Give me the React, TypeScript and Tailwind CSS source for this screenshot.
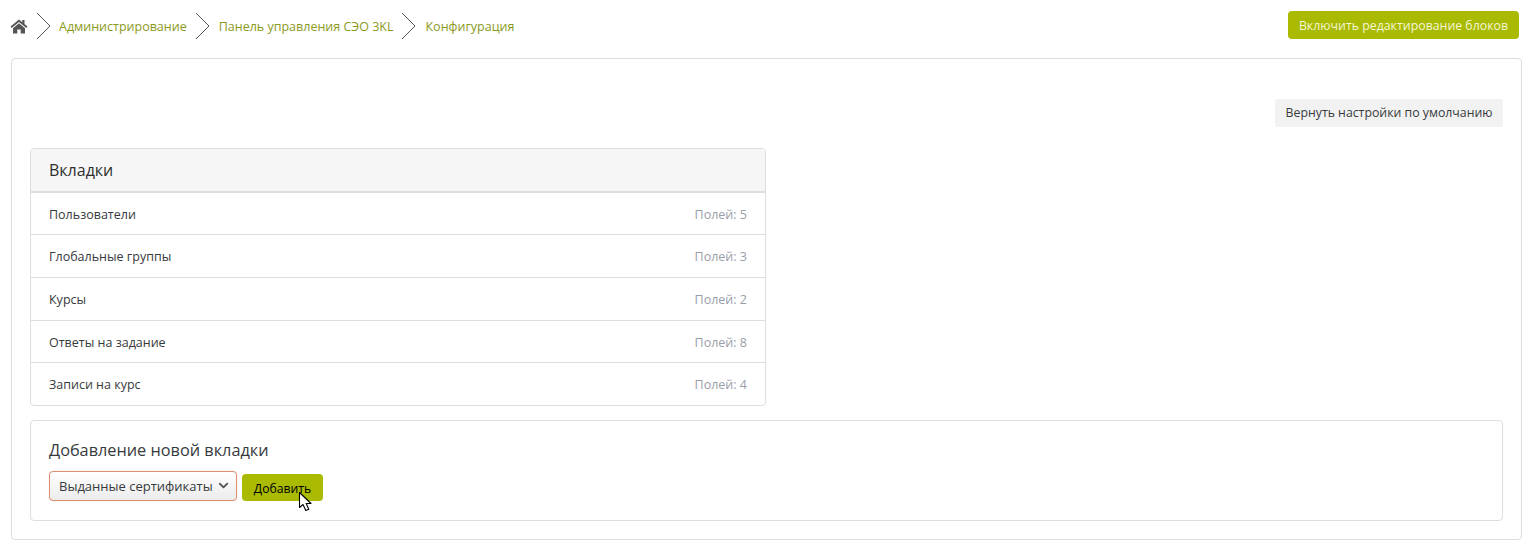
import { ChevronDown } from 'lucide-react';

const tabs = [
  { name: 'Пользователи', fields: 5, h: 'h-[42px] pt-[3px]' },
  { name: 'Глобальные группы', fields: 3, h: 'h-[43px] pt-[2px]' },
  { name: 'Курсы', fields: 2, h: 'h-[43px] pt-[2px]' },
  { name: 'Ответы на задание', fields: 8, h: 'h-[42px] pt-[3px]' },
  { name: 'Записи на курс', fields: 4, h: 'h-[42px] pt-[2px]' },
];

function Sep() {
  return (
    <svg width="15" height="28" viewBox="0 0 15 28" className="shrink-0" fill="none">
      <path d="M1 1 L14 14 L1 27" stroke="#555" strokeWidth="1" />
    </svg>
  );
}

function Cursor() {
  return (
    <svg width="16" height="21" viewBox="0 0 16 21" className="absolute left-[56px] top-[17px]">
      <path d="M1.5 1.5 V16.5 L5 13.5 L7.8 19.5 L10.8 18.2 L8.2 12.5 H13 Z" fill="#fff" stroke="#000" strokeWidth="1.1" strokeLinejoin="round" />
    </svg>
  );
}

export default function App() {
  return (
    <div className="w-[1533px] h-[552px] bg-white text-[#373a3c] font-['Open_Sans',sans-serif] overflow-hidden">
      {/* Breadcrumb */}
      <div className="h-[58px] flex items-start justify-between pl-[10px] pr-[14px]">
        <div className="flex items-center h-[28px] mt-[12px] text-[12.5px] text-[#8a9a1c]">
          <svg width="18" height="15" viewBox="0 0 18 15" className="shrink-0 mr-[8px]">
            <path d="M9 0.5 L0.5 7.6 L1.7 9 L9 3 L16.3 9 L17.5 7.6 L14.5 5 V1 H12.3 V3.2 Z" fill="#555" />
            <path d="M9 4.2 L3 9.2 V14.5 H7.3 V10.5 H10.7 V14.5 H15 V9.2 Z" fill="#555" />
          </svg>
          <Sep />
          <span className="ml-[8px] pt-[2px]">Администрирование</span>
          <span className="ml-[8px]"><Sep /></span>
          <span className="ml-[9px] pt-[2px]">Панель управления СЭО 3KL</span>
          <span className="ml-[8px]"><Sep /></span>
          <span className="ml-[9px] pt-[2px]">Конфигурация</span>
        </div>
        <button className="mt-[11px] h-[28px] w-[231px] pt-[2px] rounded-[4px] bg-[#aaba00] text-[#f4f6d8] text-[12.35px]">
          Включить редактирование блоков
        </button>
      </div>

      {/* Main card */}
      <div className="mx-[11px] w-[1511px] h-[482px] border border-[#dedede] rounded-[4px] px-[18px] pt-[40px]">
        <div className="flex justify-end">
          <button className="h-[28px] w-[228px] pt-[1px] rounded-[2px] bg-[#f2f2f2] text-[#373a3c] text-[12.3px]">
            Вернуть настройки по умолчанию
          </button>
        </div>

        <div className="mt-[21px] w-[736px] border border-[#dedede] rounded-[4px] overflow-hidden">
          <div className="h-[44px] flex items-center px-[18px] bg-[#f6f6f6] border-b-2 border-[#dedede] text-[16px] text-[#2f2f2f]">
            Вкладки
          </div>
          {tabs.map((t, i) => (
            <div
              key={t.name}
              className={`${t.h} flex items-center justify-between px-[18px] text-[12.5px] ${i < tabs.length - 1 ? 'border-b border-[#dedede]' : ''}`}
            >
              <span>{t.name}</span>
              <span className="text-[#9a9ea8]">Полей: {t.fields}</span>
            </div>
          ))}
        </div>

        <div className="mt-[14px] h-[101px] border border-[#dedede] rounded-[4px] px-[18px] pt-[18px]">
          <div className="text-[16.3px] leading-[22px] text-[#373a3c]">Добавление новой вкладки</div>
          <div className="flex items-start mt-[10px]">
            <div className="w-[188px] h-[30px] flex items-center justify-between pl-[9px] pr-[5px] pt-[1px] border border-[#dc8f6e] rounded-[4px] shadow-[0_0_1px_#e8b9a4] bg-gradient-to-b from-white to-[#ececec] text-[13px]">
              <span>Выданные сертификаты</span>
              <ChevronDown size={15} strokeWidth={3} className="text-[#555] -mt-[2px]" />
            </div>
            <div className="relative ml-[5px] mt-[3px]">
              <button className="w-[81px] h-[27px] pt-[3px] rounded-[4px] bg-[#aaba00] text-black text-[12.2px]">
                Добавить
              </button>
              <Cursor />
            </div>
          </div>
        </div>
      </div>
    </div>
  );
}
